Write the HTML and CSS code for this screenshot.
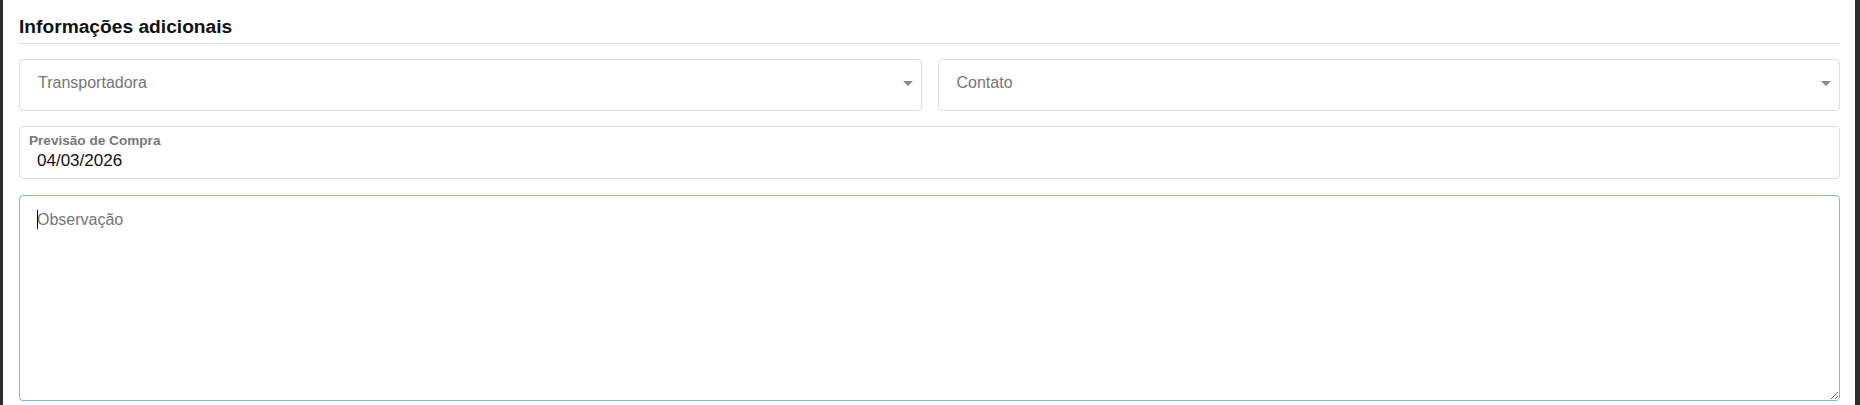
FILE: index.html
```html
<!DOCTYPE html>
<html lang="pt-BR">
<head>
<meta charset="utf-8">
<title>Informações adicionais</title>
<link rel="stylesheet" href="styles.css">
</head>
<body>
<div class="panel">
  <h4 class="section-title">Informações adicionais</h4>
  <div class="row-2">
    <div class="select-field">
      <span class="placeholder">Transportadora</span>
      <span class="caret-down"></span>
    </div>
    <div class="select-field">
      <span class="placeholder">Contato</span>
      <span class="caret-down"></span>
    </div>
  </div>
  <div class="float-field">
    <label class="float-label">Previsão de Compra</label>
    <div class="float-value">04/03/2026</div>
  </div>
  <div class="textarea-wrap">
    <textarea class="obs" placeholder="Observação"></textarea>
  </div>
</div>
</body>
</html>
```

FILE: styles.css
```css
html, body {
  margin: 0;
  padding: 0;
  background: #2d2d2d;
  height: 100%;
}

.panel {
  margin: 0 5px 0 3px;
  background: #ffffff;
  padding: 15px 15px 0 16px;
  height: 405px;
  box-sizing: border-box;
  font-family: "Liberation Sans", Arial, sans-serif;
}

.section-title {
  margin: 0 0 15px 0;
  padding: 0 0 5px 0;
  font-size: 19.2px;
  line-height: 23px;
  font-weight: 700;
  color: #111;
  border-bottom: 1px solid #dddddd;
}

.row-2 {
  display: grid;
  grid-template-columns: 1fr 1fr;
  gap: 16px;
  margin-bottom: 15px;
}

.select-field {
  height: 52px;
  box-sizing: border-box;
  border: 1px solid #dcdcdc;
  border-radius: 4px;
  display: flex;
  align-items: center;
  justify-content: space-between;
  padding: 0 8px 4px 18px;
}

.placeholder {
  font-size: 16px;
  color: #757575;
}

.caret-down {
  width: 0;
  height: 0;
  border-left: 5px solid transparent;
  border-right: 5px solid transparent;
  border-top: 5px solid #888888;
}

.float-field {
  height: 53px;
  box-sizing: border-box;
  border: 1px solid #dcdcdc;
  border-radius: 4px;
  padding: 6px 10px 0 9px;
  margin-bottom: 16px;
}

.float-label {
  display: block;
  font-size: 13.6px;
  line-height: 16px;
  font-weight: 700;
  color: #777777;
}

.float-value {
  margin-top: 2px;
  padding-left: 8px;
  font-size: 17px;
  line-height: 20px;
  color: #111111;
}

.textarea-wrap {
  position: relative;
}

.textarea-wrap::after {
  content: "";
  position: absolute;
  left: 18px;
  top: 15px;
  width: 1px;
  height: 19px;
  background: #000;
}

.obs {
  display: block;
  width: 100%;
  height: 206px;
  box-sizing: border-box;
  border: 1px solid #80b6e0;
  border-radius: 4px;
  padding: 15px 17px;
  font-family: "Liberation Sans", Arial, sans-serif;
  font-size: 16px;
  line-height: normal;
  color: #222;
  resize: vertical;
  outline: none;
  margin: 0;
}

.obs::placeholder {
  color: #757575;
}
```
